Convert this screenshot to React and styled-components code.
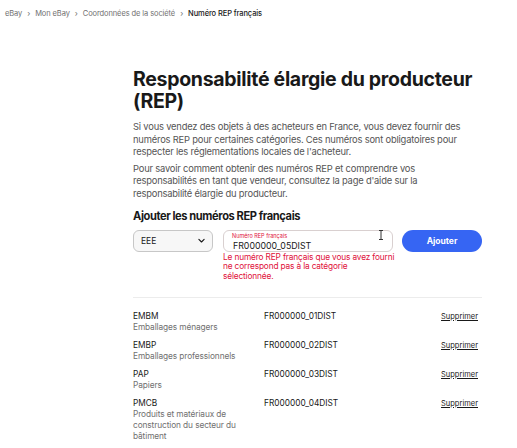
import React from "react";
import styled, { createGlobalStyle } from "styled-components";

const GlobalStyle = createGlobalStyle`
  html, body {
    margin: 0;
    padding: 0;
    background: #fff;
  }
  body {
    font-family: Inter, "Liberation Sans", sans-serif;
    color: #191919;
  }
`;

const Page = styled.div`
  width: 517px;
  height: 448px;
  overflow: hidden;
  position: relative;
`;

const Breadcrumb = styled.nav`
  display: flex;
  align-items: center;
  gap: 5px;
  padding: 8px 0 0 5px;
  font-size: 7.5px;
  color: #707070;
  letter-spacing: -0.1px;
`;

const Crumb = styled.span`
  color: ${(p) => (p.current ? "#191919" : "#707070")};
  font-weight: ${(p) => (p.current ? 500 : 400)};
`;

const Sep = styled.span`
  font-size: 8px;
  color: #707070;
`;

const Main = styled.main`
  width: 349px;
  margin: 0 0 0 133px;
  padding-top: 50px;
`;

const Title = styled.h1`
  margin: 0;
  font-size: 19.5px;
  line-height: 22px;
  font-weight: 700;
  letter-spacing: -0.3px;
  color: #191919;
`;

const Para = styled.p`
  margin: ${(p) => p.top || 0}px 0 0;
  font-size: 9.4px;
  line-height: 12.6px;
  color: #555;
  letter-spacing: -0.2px;
  white-space: nowrap;
`;

const SubTitle = styled.h2`
  margin: 7px 0 0;
  font-size: 11.1px;
  line-height: 16px;
  font-weight: 700;
  letter-spacing: -0.4px;
  color: #191919;
`;

const FormRow = styled.div`
  display: flex;
  align-items: flex-start;
  margin-top: 6px;
`;

const Select = styled.div`
  box-sizing: border-box;
  width: 80px;
  height: 22px;
  border: 1px solid #c7c7c7;
  border-radius: 6px;
  background: #f7f7f7;
  display: flex;
  align-items: center;
  justify-content: space-between;
  padding: 0 6px 0 7px;
  font-size: 8.5px;
  color: #191919;
`;

const Field = styled.div`
  margin-left: 10px;
  width: 170px;
  position: relative;
`;

const InputBox = styled.div`
  box-sizing: border-box;
  height: 22px;
  border: 1px solid #d9d0d0;
  border-radius: 6px;
  padding: 2px 9px 0;
  display: flex;
  flex-direction: column;
`;

const FloatLabel = styled.span`
  font-size: 5.5px;
  line-height: 7px;
  color: #e0103a;
  margin-left: -1px;
`;

const InputValue = styled.span`
  font-size: 8.8px;
  line-height: 11px;
  color: #191919;
`;

const ErrorText = styled.div`
  font-size: 8.3px;
  line-height: 9.7px;
  color: #e0103a;
  margin-top: 1px;
  white-space: nowrap;
  letter-spacing: -0.15px;
`;

const Cursor = styled.svg`
  position: absolute;
  right: 9px;
  top: 0px;
`;

const AddButton = styled.button`
  margin-left: 9px;
  width: 80px;
  height: 22px;
  border: none;
  border-radius: 11px;
  background: #3665f3;
  color: #fff;
  font-family: inherit;
  font-size: 8.5px;
  font-weight: 700;
  cursor: pointer;
`;

const Divider = styled.hr`
  margin: 15px 0 0;
  border: none;
  border-top: 1px solid #ececec;
`;

const List = styled.div`
  margin-top: 13px;
  display: flex;
  flex-direction: column;
  gap: 7px;
`;

const Row = styled.div`
  display: grid;
  grid-template-columns: 131px 1fr auto;
  align-items: start;
`;

const Code = styled.div`
  font-size: 8.3px;
  line-height: 11px;
  color: #191919;
`;

const Desc = styled.div`
  font-size: 8.3px;
  line-height: 11px;
  color: #707070;
  width: 112px;
  letter-spacing: -0.1px;
`;

const Number = styled.div`
  font-size: 8.3px;
  line-height: 11px;
  color: #191919;
`;

const Remove = styled.a`
  font-size: 7.5px;
  line-height: 11px;
  color: #191919;
  text-decoration: underline;
  margin-right: 4px;
`;

const items = [
  { code: "EMBM", desc: "Emballages ménagers", num: "FR000000_01DIST" },
  { code: "EMBP", desc: "Emballages professionnels", num: "FR000000_02DIST" },
  { code: "PAP", desc: "Papiers", num: "FR000000_03DIST" },
  {
    code: "PMCB",
    desc: "Produits et matériaux de construction du secteur du bâtiment",
    num: "FR000000_04DIST",
  },
];

export default function App() {
  return (
    <Page>
      <GlobalStyle />
      <Breadcrumb>
        <Crumb>eBay</Crumb>
        <Sep>›</Sep>
        <Crumb>Mon eBay</Crumb>
        <Sep>›</Sep>
        <Crumb>Coordonnées de la société</Crumb>
        <Sep>›</Sep>
        <Crumb current>Numéro REP français</Crumb>
      </Breadcrumb>
      <Main>
        <Title>Responsabilité élargie du producteur (REP)</Title>
        <Para top={9}>
          Si vous vendez des objets à des acheteurs en France, vous devez fournir des
          <br />
          numéros REP pour certaines catégories. Ces numéros sont obligatoires pour
          <br />
          respecter les réglementations locales de l'acheteur.
        </Para>
        <Para top={4}>
          Pour savoir comment obtenir des numéros REP et comprendre vos
          <br />
          responsabilités en tant que vendeur, consultez la page d'aide sur la
          <br />
          responsabilité élargie du producteur.
        </Para>
        <SubTitle>Ajouter les numéros REP français</SubTitle>
        <FormRow>
          <Select>
            <span>EEE</span>
            <svg width="9" height="9" viewBox="0 0 24 24" fill="none">
              <path d="M5 9l7 7 7-7" stroke="#191919" strokeWidth="3" strokeLinecap="round" strokeLinejoin="round" />
            </svg>
          </Select>
          <Field>
            <InputBox>
              <FloatLabel>Numéro REP français</FloatLabel>
              <InputValue>FR000000_05DIST</InputValue>
            </InputBox>
            <Cursor width="6" height="10" viewBox="0 0 6 10">
              <path d="M1 0.5h4M1 9.5h4M3 0.5v9" stroke="#333" strokeWidth="1" fill="none" />
            </Cursor>
            <ErrorText>
              Le numéro REP français que vous avez fourni
              <br />
              ne correspond pas à la catégorie
              <br />
              sélectionnée.
            </ErrorText>
          </Field>
          <AddButton>Ajouter</AddButton>
        </FormRow>
        <Divider />
        <List>
          {items.map((it) => (
            <Row key={it.code}>
              <div>
                <Code>{it.code}</Code>
                <Desc>{it.desc}</Desc>
              </div>
              <Number>{it.num}</Number>
              <Remove>Supprimer</Remove>
            </Row>
          ))}
        </List>
      </Main>
    </Page>
  );
}
